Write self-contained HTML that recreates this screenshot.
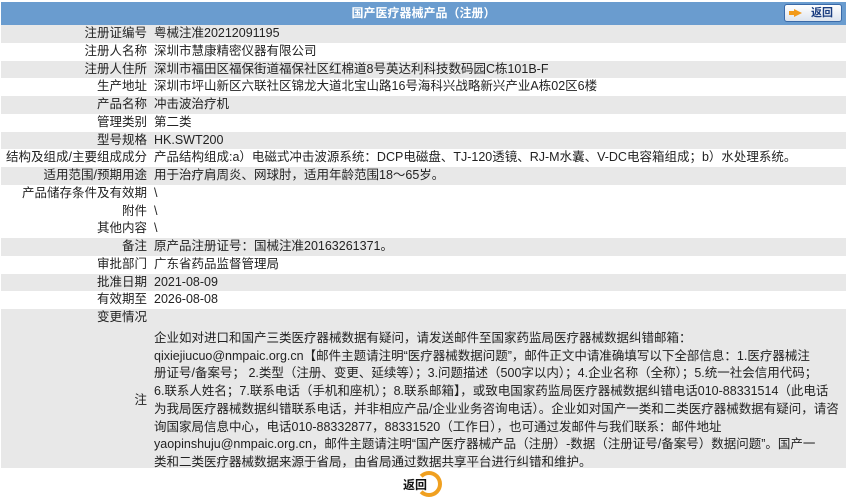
<!DOCTYPE html>
<html><head><meta charset="utf-8"><style>
*{margin:0;padding:0;box-sizing:border-box}
body{width:850px;height:500px;background:#fff;font-family:"Liberation Sans","Noto Sans CJK SC",sans-serif;font-size:12.5px;color:#222;position:relative;overflow:hidden}
.hd{position:absolute;left:1px;top:2px;width:845px;height:23px;background:#6a9ccf;color:#fff;font-weight:bold;text-align:center;line-height:23px;font-size:12px}
.bk{position:absolute;right:8px;top:4px;width:58px;height:18px;background:linear-gradient(#fff,#dde4ee);border:1px solid #3a6aa8;border-radius:3px;color:#1a3d80;font-weight:bold;font-size:11px;line-height:16px;text-align:right;padding-right:8px}
.bk i{position:absolute;left:9px;top:4px;width:0;height:0;border-left:8px solid #f29a1a;border-top:4px solid transparent;border-bottom:4px solid transparent}
.bk b{position:absolute;left:4px;top:6px;width:6px;height:4px;background:#f29a1a}
.row{position:absolute;left:1px;width:845px;height:17.75px;line-height:17.75px;white-space:nowrap}
.g{background:#e8e8e8}
.l{position:absolute;left:0;width:146px;text-align:right}
.v{position:absolute;left:153px}
.note{position:absolute;left:1px;top:327px;width:845px;height:141px;background:#e8e8e8}
.note .l{top:62px}
.note .v{top:3px;line-height:17.7px;white-space:nowrap}
.rb{position:absolute;left:403px;top:476px;font-weight:bold;font-size:12px;color:#111}
.rc{position:absolute;left:416px;top:471px;width:26px;height:26px;border-radius:50%;border:4px solid #f0a020;border-left-color:transparent;}
</style></head><body>
<div class="hd">国产医疗器械产品（注册）</div>
<div class="bk"><b></b><i></i>返回</div>
<div class="row g" style="top:25px"><span class="l">注册证编号</span><span class="v">粤械注准20212091195</span></div>
<div class="row" style="top:42.75px"><span class="l">注册人名称</span><span class="v">深圳市慧康精密仪器有限公司</span></div>
<div class="row g" style="top:60.5px"><span class="l">注册人住所</span><span class="v">深圳市福田区福保街道福保社区红棉道8号英达利科技数码园C栋101B-F</span></div>
<div class="row" style="top:78.25px"><span class="l">生产地址</span><span class="v">深圳市坪山新区六联社区锦龙大道北宝山路16号海科兴战略新兴产业A栋02区6楼</span></div>
<div class="row g" style="top:96px"><span class="l">产品名称</span><span class="v">冲击波治疗机</span></div>
<div class="row" style="top:113.75px"><span class="l">管理类别</span><span class="v">第二类</span></div>
<div class="row g" style="top:131.5px"><span class="l">型号规格</span><span class="v">HK.SWT200</span></div>
<div class="row" style="top:149.25px"><span class="l">结构及组成/主要组成成分</span><span class="v">产品结构组成:a）电磁式冲击波源系统：DCP电磁盘、TJ-120透镜、RJ-M水囊、V-DC电容箱组成；b）水处理系统。</span></div>
<div class="row g" style="top:167px"><span class="l">适用范围/预期用途</span><span class="v">用于治疗肩周炎、网球肘，适用年龄范围18～65岁。</span></div>
<div class="row" style="top:184.75px"><span class="l">产品储存条件及有效期</span><span class="v">\</span></div>
<div class="row" style="top:202.5px"><span class="l">附件</span><span class="v">\</span></div>
<div class="row" style="top:220.25px"><span class="l">其他内容</span><span class="v">\</span></div>
<div class="row g" style="top:238px"><span class="l">备注</span><span class="v">原产品注册证号：国械注准20163261371。</span></div>
<div class="row" style="top:255.75px"><span class="l">审批部门</span><span class="v">广东省药品监督管理局</span></div>
<div class="row g" style="top:273.5px"><span class="l">批准日期</span><span class="v">2021-08-09</span></div>
<div class="row" style="top:291.25px"><span class="l">有效期至</span><span class="v">2026-08-08</span></div>
<div class="row g" style="top:309px"><span class="l">变更情况</span><span class="v"></span></div>
<div class="note"><span class="l">注</span><div class="v">企业如对进口和国产三类医疗器械数据有疑问，请发送邮件至国家药监局医疗器械数据纠错邮箱：<br>qixiejiucuo@nmpaic.org.cn【邮件主题请注明“医疗器械数据问题”，邮件正文中请准确填写以下全部信息：1.医疗器械注<br>册证号/备案号； 2.类型（注册、变更、延续等）；3.问题描述（500字以内）；4.企业名称（全称）；5.统一社会信用代码；<br>6.联系人姓名；7.联系电话（手机和座机）；8.联系邮箱】，或致电国家药监局医疗器械数据纠错电话010-88331514（此电话<br>为我局医疗器械数据纠错联系电话，并非相应产品/企业业务咨询电话）。企业如对国产一类和二类医疗器械数据有疑问，请咨<br>询国家局信息中心，电话010-88332877，88331520（工作日），也可通过发邮件与我们联系：邮件地址<br>yaopinshuju@nmpaic.org.cn，邮件主题请注明“国产医疗器械产品（注册）-数据（注册证号/备案号）数据问题”。国产一<br>类和二类医疗器械数据来源于省局，由省局通过数据共享平台进行纠错和维护。</div></div>
<div class="rc"></div>
<div class="rb">返回</div>
</body></html>
